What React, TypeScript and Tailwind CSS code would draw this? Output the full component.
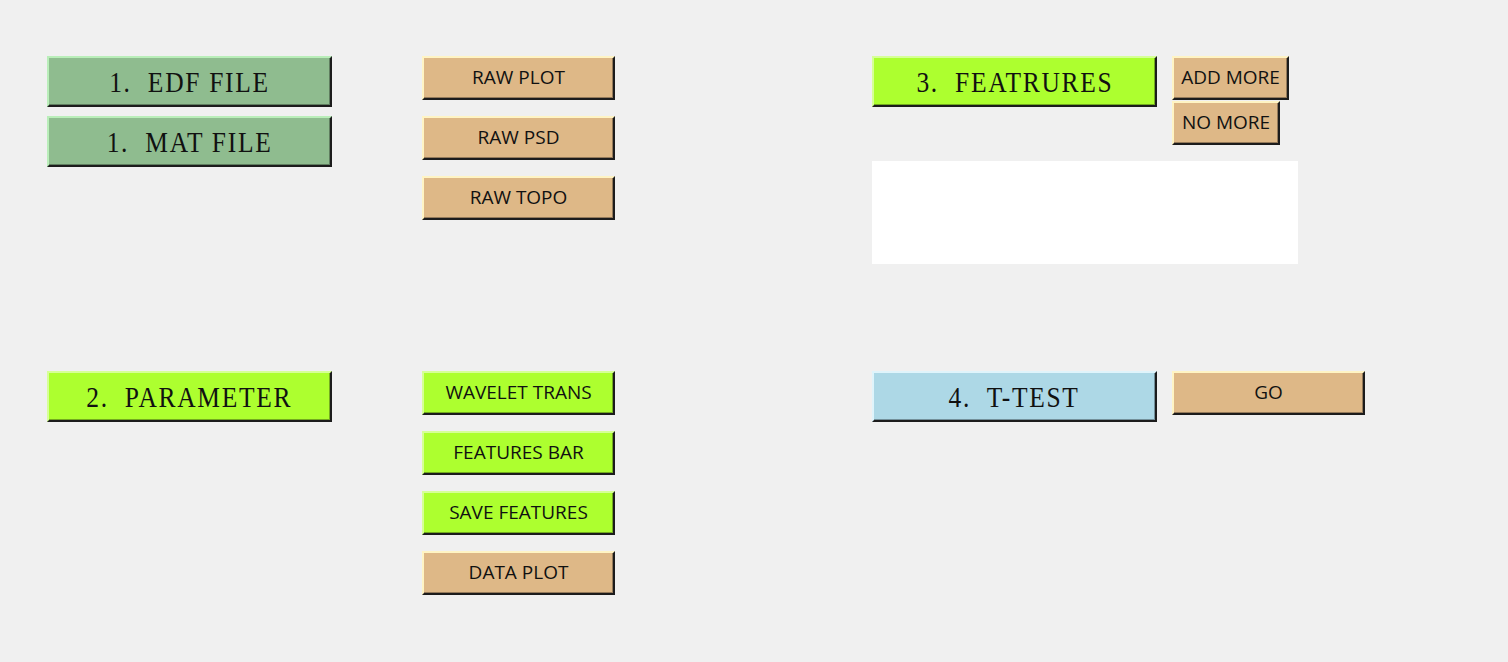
import React from 'react';

type Tone = 'sea' | 'lime' | 'tan' | 'sky';

const tones: Record<Tone, string> = {
  sea: 'bg-[#8fbc8f] border-t-[#b9eeb9] border-l-[#b9eeb9] shadow-[inset_-1px_-1px_0_#5f7d5f]',
  lime: 'bg-[#adff2f] border-t-[#d6ff97] border-l-[#d6ff97] shadow-[inset_-1px_-1px_0_#73aa1f]',
  tan: 'bg-[#deb887] border-t-[#fff4c4] border-l-[#fff4c4] shadow-[inset_-1px_-1px_0_#947a5a]',
  sky: 'bg-[#add8e6] border-t-[#dff4fb] border-l-[#dff4fb] shadow-[inset_-1px_-1px_0_#73909a]',
};

const BigButton: React.FC<{ tone: Tone; label: string }> = ({ tone, label }) => (
  <div
    className={`flex h-[51px] w-[285px] items-center justify-center border-2 border-b-[#1c1c1c] border-r-[#1c1c1c] font-['Liberation_Serif',serif] text-[30px] leading-none text-[#111] ${tones[tone]}`}
  >
    <span className="inline-block scale-x-[0.85] whitespace-pre tracking-[2px]">{label}</span>
  </div>
);

const SmallButton: React.FC<{ tone: Tone; label: string; width?: string }> = ({ tone, label, width = 'w-[193px]' }) => (
  <div
    className={`flex h-[44px] items-center justify-center border-2 border-b-[#1c1c1c] border-r-[#1c1c1c] pb-[1px] font-['Open_Sans',sans-serif] text-[19px] leading-none text-[#111] ${width} ${tones[tone]}`}
  >
    {label}
  </div>
);

export default function App() {
  return (
    <div className="h-[662px] w-[1508px] bg-[#f0f0f0] pl-[47px] pt-[56px]">
      <div className="flex h-[315px] items-start">
        <div className="flex flex-col gap-[9px]">
          <BigButton tone="sea" label="1.  EDF FILE" />
          <BigButton tone="sea" label="1.  MAT FILE" />
        </div>
        <div className="ml-[90px] flex flex-col gap-[16px]">
          <SmallButton tone="tan" label="RAW PLOT" />
          <SmallButton tone="tan" label="RAW PSD" />
          <SmallButton tone="tan" label="RAW TOPO" />
        </div>
        <div className="ml-[257px] flex flex-col">
          <div className="flex items-start gap-[15px]">
            <BigButton tone="lime" label="3.  FEATRURES" />
            <div className="flex flex-col gap-[1px]">
              <SmallButton tone="tan" label="ADD MORE" width="w-[117px]" />
              <SmallButton tone="tan" label="NO MORE" width="w-[108px]" />
            </div>
          </div>
          <div className="mt-[16px] h-[103px] w-[426px] bg-white" />
        </div>
      </div>
      <div className="flex items-start">
        <BigButton tone="lime" label="2.  PARAMETER" />
        <div className="ml-[90px] flex flex-col gap-[16px]">
          <SmallButton tone="lime" label="WAVELET TRANS" />
          <SmallButton tone="lime" label="FEATURES BAR" />
          <SmallButton tone="lime" label="SAVE FEATURES" />
          <SmallButton tone="tan" label="DATA PLOT" />
        </div>
        <div className="ml-[257px] flex items-start gap-[15px]">
          <BigButton tone="sky" label="4.  T-TEST" />
          <SmallButton tone="tan" label="GO" />
        </div>
      </div>
    </div>
  );
}
